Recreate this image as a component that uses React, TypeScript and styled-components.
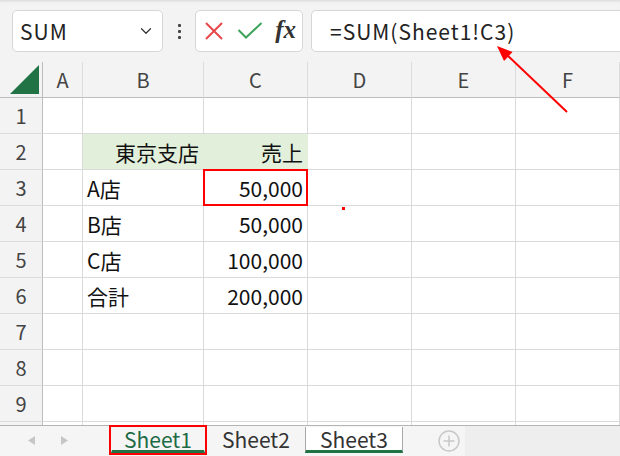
import styled, { createGlobalStyle } from "styled-components";
import { ChevronDown } from "lucide-react";

// Data
type Align = "left" | "right";
type CellData = { text: string; align?: Align; fill?: boolean; marked?: boolean };

const columns = ["A", "B", "C", "D", "E", "F"];
const rowCount = 10;

const cells: Record<string, CellData> = {
  B2: { text: "東京支店", align: "right", fill: true },
  C2: { text: "売上", align: "right", fill: true },
  B3: { text: "A店" },
  C3: { text: "50,000", align: "right", marked: true },
  B4: { text: "B店" },
  C4: { text: "50,000", align: "right" },
  B5: { text: "C店" },
  C5: { text: "100,000", align: "right" },
  B6: { text: "合計" },
  C6: { text: "200,000", align: "right" },
};

const sheets = [
  { name: "Sheet1", active: true, marked: true },
  { name: "Sheet2" },
  { name: "Sheet3", selected: true },
];

const GlobalStyle = createGlobalStyle`
  html, body {
    margin: 0;
    padding: 0;
    background: #f3f3f3;
  }
  * {
    box-sizing: border-box;
  }
`;

export default function App() {
  return (
    <>
      <GlobalStyle />
      <Page>
        <FormulaBar>
          <NameBox>
            <span>SUM</span>
            <ChevronDown size={18} strokeWidth={1.6} color="#333" />
          </NameBox>
          <Kebab>
            <i />
            <i />
            <i />
          </Kebab>
          <ActionBox>
            <svg width="20" height="20" viewBox="0 0 20 20">
              <path d="M2 2 L18 18 M18 2 L2 18" stroke="#e8474a" strokeWidth="2" fill="none" />
            </svg>
            <svg width="26" height="18" viewBox="0 0 26 18">
              <path d="M1.5 8 L9 15.5 L24.5 1" stroke="#3ca35a" strokeWidth="2" fill="none" />
            </svg>
            <Fx>fx</Fx>
          </ActionBox>
          <FormulaInput>=SUM(Sheet1!C3)</FormulaInput>
        </FormulaBar>

        <Sheet>
          <Grid>
            <Corner>
              <svg width="29" height="29" viewBox="0 0 29 29">
                <polygon points="0,29 29,0 29,29" fill="#217346" />
              </svg>
            </Corner>
            {columns.map((c) => (
              <ColHeader key={c}>{c}</ColHeader>
            ))}
            {Array.from({ length: rowCount }, (_, r) => {
              const row = r + 1;
              return [
                <RowHeader key={`h${row}`}>{row}</RowHeader>,
                ...columns.map((c) => {
                  const cell = cells[c + row];
                  return (
                    <Cell
                      key={c + row}
                      $align={cell?.align ?? "left"}
                      $fill={!!cell?.fill}
                      $marked={!!cell?.marked}
                    >
                      {cell?.text}
                    </Cell>
                  );
                }),
              ];
            })}
          </Grid>
        </Sheet>

        <TabStrip>
          <TabArea>
            <Nav>
              <svg width="7" height="9" viewBox="0 0 7 9">
                <polygon points="7,0 0,4.5 7,9" fill="#c6c6c6" />
              </svg>
              <svg width="7" height="9" viewBox="0 0 7 9">
                <polygon points="0,0 7,4.5 0,9" fill="#c6c6c6" />
              </svg>
            </Nav>
            {sheets.map((s) => (
              <Tab
                key={s.name}
                $active={!!s.active}
                $selected={!!s.selected}
                $marked={!!s.marked}
              >
                {s.name}
              </Tab>
            ))}
            <AddSheet>
              <svg width="22" height="22" viewBox="0 0 22 22">
                <circle cx="11" cy="11" r="10" stroke="#c8c8c8" strokeWidth="1.5" fill="none" />
                <path d="M11 5.5 V16.5 M5.5 11 H16.5" stroke="#c8c8c8" strokeWidth="1.5" />
              </svg>
            </AddSheet>
          </TabArea>
          <TabFiller />
        </TabStrip>

        <Annotations width="620" height="456" viewBox="0 0 620 456">
          <line x1="567" y1="112" x2="505" y2="53" stroke="#ff0000" strokeWidth="2" />
          <polygon points="497,46 504,61 512.5,52" fill="#ff0000" />
          <rect x="342" y="207" width="3" height="3" fill="#ff0000" />
        </Annotations>
      </Page>
    </>
  );
}

const font = `"Noto Sans CJK JP", "Noto Sans", sans-serif`;

const Page = styled.div`
  position: relative;
  width: 620px;
  height: 456px;
  overflow: hidden;
  background: #f3f3f3;
  font-family: ${font};
`;

const FormulaBar = styled.div`
  display: flex;
  align-items: stretch;
  height: 62px;
  padding: 10px 0 10px 12px;
  box-shadow: inset 0 3px 3px -2px rgba(0, 0, 0, 0.12);
`;

const Box = styled.div`
  display: flex;
  align-items: center;
  background: #fff;
  border: 1px solid #d6d6d6;
  border-radius: 5px;
`;

const NameBox = styled(Box)`
  width: 151px;
  justify-content: space-between;
  padding: 0 7px 0 7px;
  font-size: 21px;
  letter-spacing: 1px;
  color: #222;
`;

const Kebab = styled.div`
  width: 32px;
  display: flex;
  flex-direction: column;
  align-items: center;
  justify-content: center;
  gap: 3px;

  i {
    display: block;
    width: 3px;
    height: 3px;
    background: #444;
    border-radius: 1px;
  }
`;

const ActionBox = styled(Box)`
  width: 108px;
  padding: 0 6px 0 8px;
  justify-content: space-between;
`;

const Fx = styled.span`
  font-family: "Liberation Serif", serif;
  font-style: italic;
  font-weight: bold;
  font-size: 25px;
  color: #333;
  margin-top: -2px;
`;

const FormulaInput = styled(Box)`
  flex: 1;
  margin-left: 8px;
  margin-right: -10px;
  padding-left: 18px;
  font-size: 21px;
  letter-spacing: 1px;
  color: #222;
`;

const Sheet = styled.div`
  height: 363px;
  overflow: hidden;
  background: #fff;
`;

const Grid = styled.div`
  display: grid;
  grid-template-columns: 43px 40px 121px 104px 104px 104px 104px;
  grid-auto-rows: 36px;
`;

const HeaderBase = styled.div`
  display: flex;
  align-items: center;
  justify-content: center;
  background: #f3f3f3;
  color: #444;
  font-size: 20px;
`;

const Corner = styled(HeaderBase)`
  justify-content: flex-end;
  align-items: flex-end;
  padding: 0 3px 3px 0;
  border-right: 1px solid #bdbdbd;
  border-bottom: 1px solid #bdbdbd;
`;

const ColHeader = styled(HeaderBase)`
  border-right: 1px solid #dcdcdc;
  border-bottom: 1px solid #bdbdbd;
`;

const RowHeader = styled(HeaderBase)`
  border-right: 1px solid #bdbdbd;
  border-bottom: 1px solid #dcdcdc;
`;

const Cell = styled.div<{ $align: Align; $fill: boolean; $marked: boolean }>`
  position: relative;
  display: flex;
  align-items: center;
  justify-content: ${(p) => (p.$align === "right" ? "flex-end" : "flex-start")};
  padding: 0 4px;
  font-size: 21px;
  color: #111;
  white-space: nowrap;
  background: ${(p) => (p.$fill ? "#e2efda" : "#fff")};
  border-right: 1px solid ${(p) => (p.$fill ? "#e2efda" : "#dadada")};
  border-bottom: 1px solid #dadada;

  ${(p) =>
    p.$marked &&
    `
    &::after {
      content: "";
      position: absolute;
      top: -1px;
      left: -1px;
      right: -1px;
      bottom: -1px;
      border: 2px solid #ff0000;
      z-index: 1;
    }
  `}
`;

const TabStrip = styled.div`
  display: flex;
  height: 31px;
  border-top: 1px solid #b4b4b4;
`;

const TabArea = styled.div`
  width: 465px;
  display: flex;
  align-items: flex-start;
  background: #f5f5f5;
`;

const TabFiller = styled.div`
  flex: 1;
  background: #eeeeee;
`;

const Nav = styled.div`
  width: 111px;
  height: 29px;
  display: flex;
  align-items: center;
  gap: 26px;
  padding-left: 28px;
`;

const Tab = styled.div<{ $active: boolean; $selected: boolean; $marked: boolean }>`
  width: ${(p) => (p.$marked ? "94px" : "98px")};
  height: 26px;
  margin-top: 1px;
  margin-right: ${(p) => (p.$marked ? "2px" : "0")};
  display: flex;
  align-items: center;
  justify-content: center;
  padding-top: 1px;
  font-size: 21px;
  color: ${(p) => (p.$active ? "#1d6b45" : "#333")};
  background: ${(p) => (p.$selected ? "#fff" : "transparent")};
  border-left: 1px solid ${(p) => (p.$selected ? "#a8a8a8" : "transparent")};
  border-right: 1px solid ${(p) => (p.$selected ? "#a8a8a8" : "transparent")};
  border-bottom: 3px solid
    ${(p) => (p.$active || p.$selected ? "#217346" : "transparent")};
  outline: ${(p) => (p.$marked ? "2px solid #ff0000" : "none")};
`;

const AddSheet = styled.div`
  margin: 4px 0 0 35px;
  display: flex;
`;

const Annotations = styled.svg`
  position: absolute;
  left: 0;
  top: 0;
  pointer-events: none;
`;
